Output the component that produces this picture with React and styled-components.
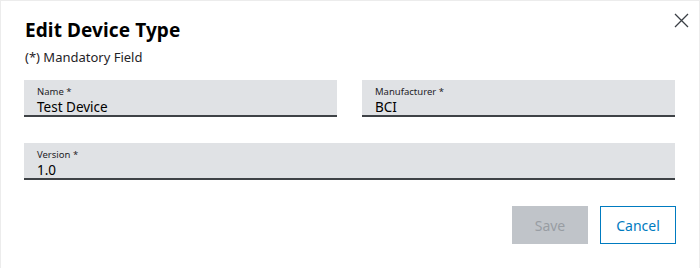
import styled, { createGlobalStyle } from 'styled-components';

const GlobalStyle = createGlobalStyle`
  body {
    margin: 0;
    background: #ffffff;
    font-family: "Noto Sans", "Open Sans", Arial, sans-serif;
    color: #000;
  }
`;

const Dialog = styled.div`
  position: relative;
  box-sizing: border-box;
  width: 700px;
  height: 268px;
  padding: 17px 24px 0 23px;
  background: #fff;
  border: 1px solid #ececec;
  border-bottom: none;
`;

const CloseButton = styled.button`
  position: absolute;
  top: 10px;
  right: 9px;
  width: 18px;
  height: 18px;
  padding: 0;
  border: none;
  background: none;
  cursor: pointer;
  display: flex;
  align-items: center;
  justify-content: center;
  color: #3a3f45;
`;

const Title = styled.h1`
  margin: 0 0 0 1px;
  font-size: 19px;
  line-height: 24px;
  font-weight: 700;
  letter-spacing: 0.1px;
`;

const Hint = styled.p`
  margin: 6px 0 0 1px;
  font-size: 13px;
  line-height: 18px;
  color: #1f2327;
`;

const FieldRow = styled.div`
  display: grid;
  grid-template-columns: ${(p) => (p.cols === 2 ? '1fr 1fr' : '1fr')};
  column-gap: 25px;
  margin-top: ${(p) => p.top}px;
`;

const Field = styled.div`
  box-sizing: border-box;
  height: 37px;
  padding: 5px 13px 0;
  background: #e0e2e5;
  border-bottom: 2px solid #3e4246;
`;

const Label = styled.div`
  font-size: 9.5px;
  line-height: 13px;
  color: #1f2327;
`;

const Value = styled.div`
  font-size: 13.5px;
  line-height: 19px;
  color: #000;
`;

const Actions = styled.div`
  display: flex;
  justify-content: flex-end;
  gap: 12px;
  margin-top: 26px;
  margin-right: -1px;
`;

const Button = styled.button`
  box-sizing: border-box;
  width: 76px;
  height: 38px;
  font-family: inherit;
  font-size: 14px;
  border: 1px solid ${(p) => (p.primary ? '#c0c4c9' : '#007bc0')};
  background: ${(p) => (p.primary ? '#c0c4c9' : '#fff')};
  color: ${(p) => (p.primary ? '#989da3' : '#007bc0')};
  cursor: ${(p) => (p.primary ? 'default' : 'pointer')};
`;

export default function App() {
  return (
    <>
      <GlobalStyle />
      <Dialog>
        <CloseButton aria-label="Close">
          <svg width="15" height="15" viewBox="0 0 15 15" fill="none" stroke="currentColor" strokeWidth="1.3">
            <path d="M1 1 L14 14 M14 1 L1 14" />
          </svg>
        </CloseButton>
        <Title>Edit Device Type</Title>
        <Hint>(*) Mandatory Field</Hint>
        <FieldRow cols={2} top={14}>
          <Field>
            <Label>Name *</Label>
            <Value>Test Device</Value>
          </Field>
          <Field>
            <Label>Manufacturer *</Label>
            <Value>BCI</Value>
          </Field>
        </FieldRow>
        <FieldRow cols={1} top={26}>
          <Field>
            <Label>Version *</Label>
            <Value>1.0</Value>
          </Field>
        </FieldRow>
        <Actions>
          <Button primary disabled>Save</Button>
          <Button>Cancel</Button>
        </Actions>
      </Dialog>
    </>
  );
}
